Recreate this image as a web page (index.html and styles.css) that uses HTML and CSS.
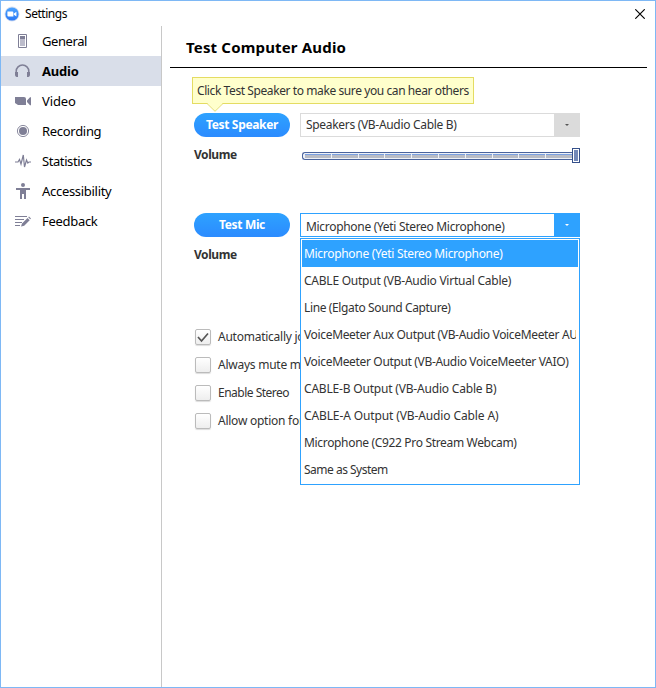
FILE: index.html
```html
<!DOCTYPE html>
<html lang="en">
<head>
<meta charset="utf-8">
<title>Settings</title>
<link rel="stylesheet" href="styles.css">
</head>
<body>
<div class="window">
  <header class="titlebar">
    <svg class="logo" width="16" height="16" viewBox="0 0 16 16">
      <defs><linearGradient id="g" x1="0" y1="0" x2="0" y2="1"><stop offset="0" stop-color="#4ba3ff"/><stop offset="1" stop-color="#2877f5"/></linearGradient></defs>
      <circle cx="8" cy="8" r="7.5" fill="#d5dff0"/><circle cx="8" cy="8" r="6.6" fill="url(#g)"/>
      <path d="M3.4 5.6h4.9q1.1 0 1.1 1.1v3.9H4.5q-1.1 0-1.1-1.1zM9.9 7.4l2.5-1.7v4.8L9.9 8.8z" fill="#fff"/>
    </svg>
    <span class="title">Settings</span>
    <svg class="close" width="10" height="10" viewBox="0 0 10 10"><path d="M.3.3l9.400 9.400M9.700.3L.3 9.700" stroke="#000" stroke-width="1.15"/></svg>
  </header>
  <div class="body">
    <nav class="sidebar">
      <a class="item"><svg width="18" height="16" viewBox="0 0 18 16"><path d="M4.500 1.500h8v13h-8z" fill="#fff" stroke="#7f7f96"/><path d="M6 3h5v3H6z" fill="#7f7f96"/><path d="M6 6h5v7H6z" fill="#bcbccb"/></svg><span class="w-general">General</span></a>
      <a class="item active"><svg width="18" height="16" viewBox="0 0 18 16"><path d="M2.200 12V8.300a6.300 6.300 0 0 1 12.600 0V12" fill="none" stroke="#7f7f96" stroke-width="1.500"/><path d="M1 9h3v5H2.600Q1 13.500 1 12zM16 9h-3v5h1.400Q16 13.500 16 12z" fill="#7f7f96"/></svg><span class="w-audio">Audio</span></a>
      <a class="item"><svg width="18" height="16" viewBox="0 0 18 16"><path d="M1 4h9Q12 4 12 6v6H4L1 10zM13 7.500L16 4.200h1v8h-1L13 9z" fill="#7f7f96"/></svg><span class="w-video">Video</span></a>
      <a class="item"><svg width="18" height="16" viewBox="0 0 18 16"><circle cx="9" cy="8" r="5.600" fill="none" stroke="#8b8b9f"/><circle cx="9" cy="8" r="4" fill="#7f7f96"/></svg><span class="w-recording">Recording</span></a>
      <a class="item"><svg width="18" height="16" viewBox="0 0 18 16"><path d="M1 9h3l1.500-2.500L7 11l2.300-9 1.200 12 2-7 1.300 3L15 9h2" fill="none" stroke="#7f7f96" stroke-width="1.200"/></svg><span class="w-statistics">Statistics</span></a>
      <a class="item"><svg width="18" height="16" viewBox="0 0 18 16"><circle cx="9" cy="2" r="2" fill="#7f7f96"/><path d="M2 5h14v2h-4v9h-2v-5H8v5H6V7H2z" fill="#7f7f96"/></svg><span class="w-accessibility">Accessibility</span></a>
      <a class="item"><svg width="18" height="16" viewBox="0 0 18 16"><path d="M1 3.500h12M1 6.500h9M1 9.500h7M1 12.500h5" stroke="#7f7f96"/><path d="M7 13.500l1-3 5.500-5.500 2.200 2.200-5.500 5.500zM14.200 4.300l.8-.8 2 2-.8.8z" fill="#7f7f96"/></svg><span class="w-feedback">Feedback</span></a>
    </nav>
    <main class="content">
      <h1>Test Computer Audio</h1>
      <div class="tip"><span>Click Test Speaker to make sure you can hear others</span>
        <svg class="tail" width="18" height="9" viewBox="0 0 18 9"><path d="M1 0l8 8 8-8z" fill="#ffffcc"/><path d="M1 .5L9 8.300 17 .5" fill="none" stroke="#e4dd6f"/></svg>
      </div>
      <section class="device">
        <button class="pill">Test Speaker</button>
        <div class="select"><span class="value">Speakers (VB-Audio Cable B)</span><span class="arrow"><i></i></span></div>
        <b class="label">Volume</b>
        <div class="slider"><div class="track"><i></i><i></i><i></i><i></i><i></i><i></i><i></i><i></i><i></i><i></i></div><div class="thumb"></div></div>
      </section>
      <section class="device mic">
        <button class="pill">Test Mic</button>
        <div class="select open"><span class="value">Microphone (Yeti Stereo Microphone)</span><span class="arrow"><i></i></span>
          <ul class="menu">
            <li class="selected"><span class="o1">Microphone (Yeti Stereo Microphone)</span></li>
            <li><span class="o2">CABLE Output (VB-Audio Virtual Cable)</span></li>
            <li><span class="o3">Line (Elgato Sound Capture)</span></li>
            <li><span class="o4">VoiceMeeter Aux Output (VB-Audio VoiceMeeter AUX VAIO)</span></li>
            <li><span class="o5">VoiceMeeter Output (VB-Audio VoiceMeeter VAIO)</span></li>
            <li><span class="o6">CABLE-B Output (VB-Audio Cable B)</span></li>
            <li><span class="o7">CABLE-A Output (VB-Audio Cable A)</span></li>
            <li><span class="o8">Microphone (C922 Pro Stream Webcam)</span></li>
            <li><span class="o9">Same as System</span></li>
          </ul>
        </div>
        <b class="label">Volume</b>
      </section>
      <div class="checks">
        <label><span class="box"><svg width="14" height="14" viewBox="0 0 14 14"><path d="M2 7l3.500 4L12 3.500" fill="none" stroke="#555" stroke-width="1.700"/></svg></span><span>Automatically jo</span></label>
        <label><span class="box"></span><span>Always mute mi</span></label>
        <label><span class="box"></span><span class="stereo">Enable Stereo</span></label>
        <label><span class="box"></span><span>Allow option for</span></label>
      </div>
    </main>
  </div>
</div>
</body>
</html>
```
FILE: styles.css
```css
* { box-sizing: border-box; }
body { margin: 0; font: 12px/18px "Noto Sans", "Open Sans", sans-serif; color: #333; background: #fff; }
.window { width: 656px; height: 688px; border: 1px solid #7eb8f5; display: flex; flex-direction: column; overflow: hidden; }
.titlebar { height: 25px; flex: none; display: flex; align-items: center; padding: 0 10px 0 3px; color: #000; }
.logo { margin-right: 5px; }
.title { flex: 1; letter-spacing: -.45px; }
.body { flex: 1; display: flex; }
.sidebar { width: 161px; border-right: 1px solid #c8c8c8; }
.item { height: 30px; display: flex; align-items: center; padding-left: 13px; gap: 10px; color: #000; font-size: 13px; letter-spacing: -.3px; }
.active { background: #d9dee9; font-weight: 700; }
.w-general, .w-statistics { letter-spacing: -.42px; }
.w-audio { letter-spacing: -.2px; }
.w-video { letter-spacing: -.1px; }
.content { flex: 1; padding: 0 8px; }
h1 { margin: 0; height: 42px; border-bottom: 1px solid #000; padding: 11px 0 0 16px; font-size: 15px; line-height: 21px; color: #000; letter-spacing: .17px; }
.tip { position: relative; width: 282px; height: 27px; margin: 9px 0 9px 22px; border: 1px solid #e4dc62; background: #ffffcc; padding: 4px; white-space: nowrap; letter-spacing: -.41px; }
.tail { position: absolute; left: 13px; top: 25px; }
.device { display: grid; grid-template-columns: 96px 280px; column-gap: 10px; grid-template-rows: 24px 36px; margin-left: 24px; height: 100px; align-content: start; }
.pill { border: 0; border-radius: 12px; padding: 0; height: 24px; background: linear-gradient(#2ea2ff, #2b8bff); color: #fff; font: 700 12px/18px "Noto Sans", sans-serif; letter-spacing: -.34px; }
.select { position: relative; border: 1px solid #dbdbdb; display: flex; justify-content: space-between; white-space: nowrap; height: 24px; letter-spacing: -.31px; }
.value { padding-left: 5px; line-height: 22px; }
.arrow { width: 26px; margin: -1px; background: #dbdbdb; display: flex; align-items: center; justify-content: center; }
.arrow i { border: 2px solid transparent; border-top-color: #555; border-bottom: 0; }
.open { border-color: #2ea2ff; }
.open .value { line-height: 26px; }
.open .arrow { background: #2ea2ff; }
.open .arrow i { border-top-color: #fff; }
.menu { position: absolute; z-index: 1; left: -1px; top: 24px; width: 280px; height: 247px; margin: 0; padding: 1px; list-style: none; border: 1px solid #2ea2ff; background: #fff; }
.menu li { height: 27px; line-height: 27px; padding-left: 2px; margin-right: 2px; overflow: hidden; }
.menu .selected { background: #2ea2ff; color: #fff; margin-right: 0; }
.o2 { letter-spacing: -.24px; }
.o3 { letter-spacing: -.37px; }
.o4, .o5 { letter-spacing: -.34px; }
.o6 { letter-spacing: -.19px; }
.o7 { letter-spacing: -.12px; }
.o8 { letter-spacing: -.33px; }
.o9 { letter-spacing: -.5px; }
.label { line-height: 36px; letter-spacing: -.45px; }
.slider { display: flex; align-items: flex-start; padding: 11px 0 0 2px; }
.track { flex: 1; height: 8px; margin-top: 4px; border: 1px solid #4a639d; border-right: 0; border-radius: 3px 0 0 3px; display: flex; gap: 1px; padding: 1px 0 1px 2px; background: #eef1f7; }
.track i { flex: 1; background: #b9bcc6; border-top: 1px solid #7ba0e0; }
.thumb { width: 8px; height: 15px; border: 1px solid #35508a; background: #7288b8; box-shadow: inset 0 0 0 1px #fff; }
.checks { margin-left: 25px; padding-top: 10px; }
.checks label { display: flex; align-items: center; height: 28px; gap: 7px; white-space: nowrap; letter-spacing: -.25px; }
.checks .stereo { letter-spacing: -.5px; }
.box { width: 16px; height: 16px; border: 1px solid #bbb; border-radius: 2px; background: linear-gradient(#fff, #eee); box-shadow: 0 1px 1px #ddd; }
.box svg { display: block; }
```
